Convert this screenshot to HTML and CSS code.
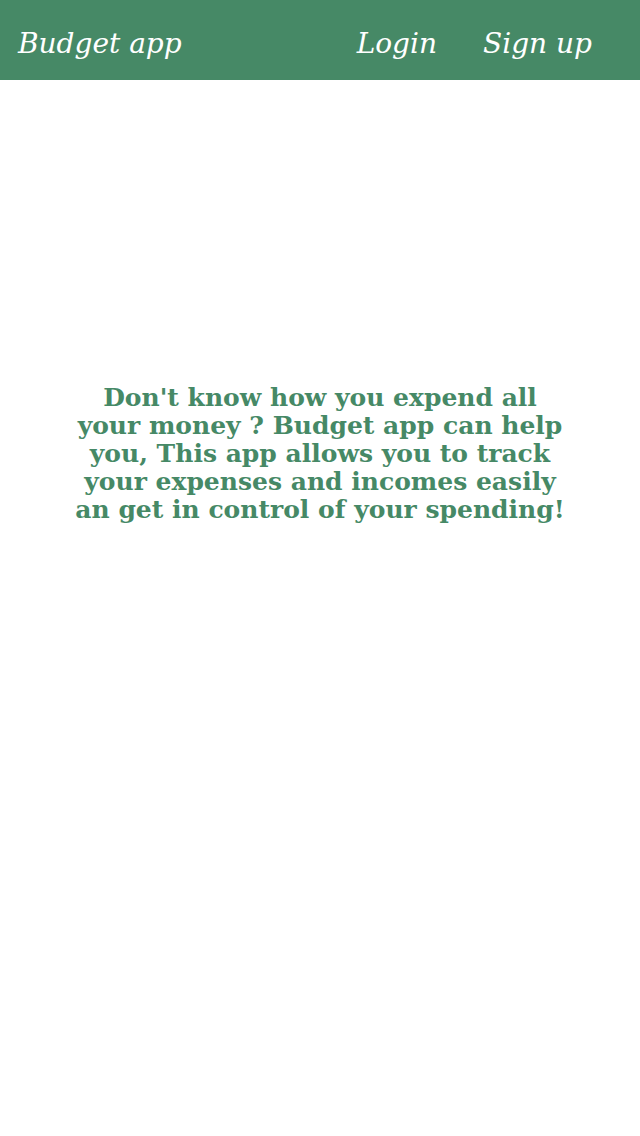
FILE: index.html
```html
<!DOCTYPE html>
<html lang="en">
<head>
<meta charset="utf-8">
<title>Budget app</title>
<link rel="stylesheet" href="styles.css">
</head>
<body>
<header class="topbar">
  <a class="brand" href="#">Budget app</a>
  <nav class="nav">
    <a class="nav-link" href="#">Login</a>
    <a class="nav-link" href="#">Sign up</a>
  </nav>
</header>
<main class="hero">
  <p class="hero-text">Don't know how you expend all your money ? Budget app can help you, This app allows you to track your expenses and incomes easily an get in control of your spending!</p>
</main>
</body>
</html>
```
FILE: styles.css
```css
html, body {
  margin: 0;
  padding: 0;
  background: #ffffff;
}
.topbar {
  height: 80px;
  background: #468966;
  display: flex;
  align-items: center;
  justify-content: space-between;
  padding: 6px 48px 0 18px;
  box-sizing: border-box;
}
.brand, .nav-link {
  color: #ffffff;
  text-decoration: none;
  font-family: "DejaVu Serif", "Liberation Serif", serif;
  font-style: italic;
  font-size: 28px;
}
.nav {
  display: flex;
  gap: 46px;
}
.hero {
  padding-top: 304px;
  display: flex;
  justify-content: center;
}
.hero-text {
  margin: 0;
  width: 496px;
  text-align: center;
  color: #468966;
  font-family: "DejaVu Serif", serif;
  font-weight: bold;
  font-size: 25px;
  line-height: 28px;
}
```
